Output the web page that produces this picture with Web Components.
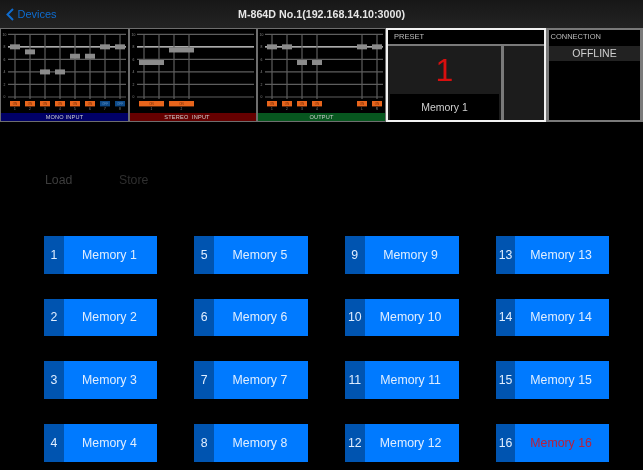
<!DOCTYPE html>
<html>
<head>
<meta charset="utf-8">
<title>M-864D</title>
<style>
  html, body { margin: 0; padding: 0; background: #000; }
  body { width: 643px; height: 470px; overflow: hidden; font-family: "Liberation Sans", Arial, sans-serif; filter: blur(0.3px); }
  .strip { display: flex; align-items: flex-start; }
</style>
</head>
<body>
  <nav-bar back="Devices" title="M-864D No.1(192.168.14.10:3000)"></nav-bar>
  <div class="strip">
    <fader-panel label="MONO INPUT" color="#000066" width="129" data-lines="15,30,45,60,75,90,105,120"
      data-faders="8,7.2,4,4,6.5,6.5,8,8" data-names="1,2,3,4,5,6,7,8" data-off="6,7"></fader-panel>
    <fader-panel label="STEREO&nbsp; INPUT" color="#650000" width="128" data-lines="15,30,45,60"
      data-faders="5.5,7.5" data-names="1,2" data-wide="1" style="--label-shift: 12px"></fader-panel>
    <fader-panel label="OUTPUT" color="#07571f" width="129" data-lines="15,30,45,60,105,120"
      data-faders="8,8,5.5,5.5,8,8" data-names="1,2,3,4,L,R"></fader-panel>
    <preset-panel number="1" name="Memory 1"></preset-panel>
    <connection-panel status="OFFLINE"></connection-panel>
  </div>
  <action-row>
    <span style="color:#3d3d3d">Load</span>
    <span style="color:#2f2f2f">Store</span>
  </action-row>
  <memory-grid>
    <memory-button number="1" name="Memory 1"></memory-button>
    <memory-button number="2" name="Memory 2"></memory-button>
    <memory-button number="3" name="Memory 3"></memory-button>
    <memory-button number="4" name="Memory 4"></memory-button>
    <memory-button number="5" name="Memory 5"></memory-button>
    <memory-button number="6" name="Memory 6"></memory-button>
    <memory-button number="7" name="Memory 7"></memory-button>
    <memory-button number="8" name="Memory 8"></memory-button>
    <memory-button number="9" name="Memory 9"></memory-button>
    <memory-button number="10" name="Memory 10"></memory-button>
    <memory-button number="11" name="Memory 11"></memory-button>
    <memory-button number="12" name="Memory 12"></memory-button>
    <memory-button number="13" name="Memory 13"></memory-button>
    <memory-button number="14" name="Memory 14"></memory-button>
    <memory-button number="15" name="Memory 15"></memory-button>
    <memory-button number="16" name="Memory 16" active></memory-button>
  </memory-grid>

<script>
class NavBar extends HTMLElement {
  constructor() {
    super();
    this.attachShadow({ mode: 'open' });
  }

  connectedCallback() {
    this.shadowRoot.innerHTML = `
      <style>
        :host {
          display: flex;
          align-items: center;
          justify-content: center;
          position: relative;
          box-sizing: border-box;
          height: 28px;
          background: linear-gradient(#171717, #232323);
          color: #e6e6e6;
        }
        .back {
          position: absolute;
          left: 6px;
          top: 0;
          height: 28px;
          display: flex;
          align-items: center;
          gap: 3.5px;
          color: #0f6ccf;
          font-size: 11px;
        }
        svg { display: block; }
        .title { font-size: 10.7px; font-weight: bold; }
      </style>
      <div class="back">
        <svg width="8" height="13" viewBox="0 0 8 13">
          <path d="M7 1 L1.5 6.5 L7 12" fill="none" stroke="#0f6ccf" stroke-width="2"/>
        </svg>
        <span>${this.getAttribute('back')}</span>
      </div>
      <div class="title">${this.getAttribute('title')}</div>
    `;
  }
}

class FaderPanel extends HTMLElement {
  constructor() {
    super();
    this.attachShadow({ mode: 'open' });
  }

  connectedCallback() {
    const width = Number(this.getAttribute('width'));
    const lines = this.dataset.lines.split(',').map(Number);
    const faders = this.dataset.faders.split(',').map(Number);
    const names = this.dataset.names.split(',');
    const off = (this.dataset.off || '').split(',').filter(Boolean).map(Number);
    const wide = this.dataset.wide === '1';

    // level 0..10 maps onto y 97..34
    const levelY = level => 97 - level * 6.27;
    let art = '';

    [0, 2, 4, 6, 8, 10].forEach(level => {
      const y = levelY(level);
      art += `<line x1="8" x2="${width - 3}" y1="${y}" y2="${y}" stroke="${level === 8 ? '#e4e4e4' : '#5e5e5e'}" stroke-width="1.2"/>`;
      art += `<text x="4.5" y="${y + 1.2}" font-size="3.4" fill="#8a8a8a" text-anchor="middle">${level}</text>`;
    });
    lines.forEach(x => {
      art += `<line x1="${x}" x2="${x}" y1="34" y2="99" stroke="#5e5e5e" stroke-width="1.2"/>`;
    });

    faders.forEach((level, i) => {
      // stereo channels span two lines each
      const cx = wide ? (lines[i * 2] + lines[i * 2 + 1]) / 2 : lines[i];
      const w = wide ? 25 : 10;
      const isOff = off.includes(i);
      art += `<rect x="${cx - w / 2}" y="${levelY(level) - 2.5}" width="${w}" height="5" fill="#8b8b8b"/>`;
      art += `<rect x="${cx - w / 2}" y="101" width="${w}" height="5.4" fill="${isOff ? '#0e4a88' : '#e8651c'}"/>`;
      art += `<text x="${cx}" y="104.8" font-size="3" fill="${isOff ? '#5d8fc0' : '#6a2a08'}" text-anchor="middle">${isOff ? 'OFF' : 'ON'}</text>`;
      art += `<text x="${cx}" y="110.4" font-size="3.2" fill="#8a8a8a" text-anchor="middle">${names[i]}</text>`;
    });

    this.shadowRoot.innerHTML = `
      <style>
        :host {
          display: flex;
          flex-direction: column;
          box-sizing: border-box;
          width: ${width}px;
          height: 94.4px;
          border: 1px solid #6e6e6e;
          background: #000;
        }
        svg { display: block; flex: none; }
        .label {
          height: 8.4px;
          line-height: 8.4px;
          padding-right: var(--label-shift, 0);
          text-align: center;
          font-size: 5.6px;
          letter-spacing: 0.2px;
          color: #cfcfcf;
          background: ${this.getAttribute('color')};
        }
      </style>
      <svg width="${width - 2}" height="84" viewBox="1 29 ${width - 2} 84" font-family="Liberation Sans, Arial, sans-serif">${art}</svg>
      <div class="label">${this.getAttribute('label')}</div>
    `;
  }
}

class PresetPanel extends HTMLElement {
  constructor() {
    super();
    this.attachShadow({ mode: 'open' });
  }

  connectedCallback() {
    this.shadowRoot.innerHTML = `
      <style>
        :host {
          display: flex;
          flex-direction: column;
          box-sizing: border-box;
          width: 160px;
          height: 94px;
          border: 2px solid #f2f2f2;
          background: #7a7a7a;
          gap: 2px;
        }
        .head {
          height: 14px;
          line-height: 14px;
          padding-left: 6px;
          background: #000;
          color: #bdbdbd;
          font-size: 7.5px;
        }
        .body { flex: 1; display: flex; gap: 3px; }
        .main {
          width: 113px;
          display: flex;
          flex-direction: column;
          box-sizing: border-box;
          padding: 0 2px;
          background: #1c1c1c;
        }
        .num {
          flex: 1;
          display: flex;
          align-items: center;
          justify-content: center;
          color: #d80f0f;
          font-size: 32px;
        }
        .name {
          height: 26px;
          line-height: 26px;
          text-align: center;
          background: #000;
          color: #cfcfcf;
          font-size: 10.5px;
        }
        .side { flex: 1; background: #1c1c1c; }
      </style>
      <div class="head">PRESET</div>
      <div class="body">
        <div class="main">
          <div class="num">${this.getAttribute('number')}</div>
          <div class="name">${this.getAttribute('name')}</div>
        </div>
        <div class="side"></div>
      </div>
    `;
  }
}

class ConnectionPanel extends HTMLElement {
  constructor() {
    super();
    this.attachShadow({ mode: 'open' });
  }

  connectedCallback() {
    this.shadowRoot.innerHTML = `
      <style>
        :host {
          display: flex;
          flex-direction: column;
          box-sizing: border-box;
          width: 97px;
          height: 94px;
          border: solid #7a7a7a;
          border-width: 2px 3px;
          background: #000;
        }
        .head {
          height: 16px;
          line-height: 13px;
          padding-left: 1.5px;
          color: #bdbdbd;
          font-size: 7.5px;
        }
        .status {
          height: 15px;
          line-height: 15px;
          text-align: center;
          background: #222;
          color: #d0d0d0;
          font-size: 10.5px;
        }
      </style>
      <div class="head">CONNECTION</div>
      <div class="status">${this.getAttribute('status')}</div>
    `;
  }
}

class ActionRow extends HTMLElement {
  constructor() {
    super();
    this.attachShadow({ mode: 'open' });
    this.shadowRoot.innerHTML = `
      <style>
        :host {
          display: grid;
          grid-template-columns: 74px 74px;
          align-items: center;
          height: 20px;
          margin: 47.6px 0 46px 45px;
          font-size: 12.3px;
        }
      </style>
      <slot></slot>
    `;
  }
}

class MemoryGrid extends HTMLElement {
  constructor() {
    super();
    this.attachShadow({ mode: 'open' });
    this.shadowRoot.innerHTML = `
      <style>
        :host {
          display: grid;
          grid-auto-flow: column;
          grid-template-rows: repeat(4, 37.6px);
          grid-template-columns: 113.3px 113.7px 113.7px 113.3px;
          column-gap: 37px;
          row-gap: 25.1px;
          padding-left: 44px;
        }
      </style>
      <slot></slot>
    `;
  }
}

class MemoryButton extends HTMLElement {
  constructor() {
    super();
    this.attachShadow({ mode: 'open' });
  }

  connectedCallback() {
    const active = this.hasAttribute('active');
    this.shadowRoot.innerHTML = `
      <style>
        :host {
          display: flex;
          background: #007aff;
          color: #e0eeff;
          font-size: 12.3px;
        }
        .num {
          width: 19.6px;
          flex: none;
          display: flex;
          align-items: center;
          justify-content: center;
          background: #0054b0;
        }
        .name {
          flex: 1;
          display: flex;
          align-items: center;
          justify-content: center;
          padding-right: 2px;
          color: ${active ? '#b8203c' : '#e0eeff'};
        }
      </style>
      <div class="num">${this.getAttribute('number')}</div>
      <div class="name">${this.getAttribute('name')}</div>
    `;
  }
}

customElements.define('nav-bar', NavBar);
customElements.define('fader-panel', FaderPanel);
customElements.define('preset-panel', PresetPanel);
customElements.define('connection-panel', ConnectionPanel);
customElements.define('action-row', ActionRow);
customElements.define('memory-grid', MemoryGrid);
customElements.define('memory-button', MemoryButton);
</script>
</body>
</html>
